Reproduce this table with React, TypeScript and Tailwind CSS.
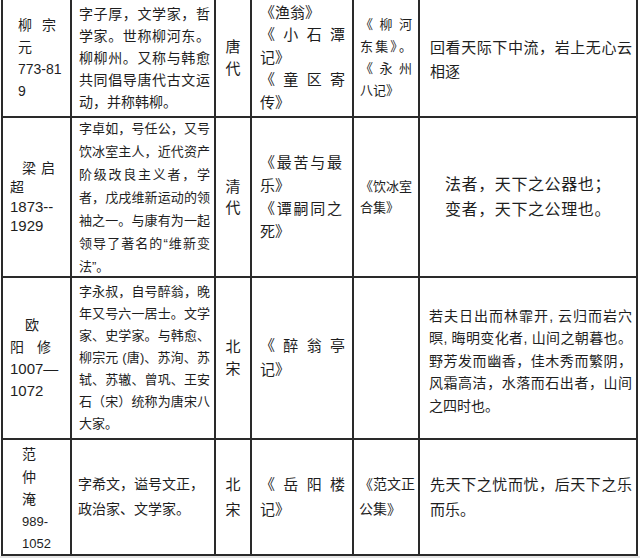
const J = '[text-align-last:justify] text-justify';

function Cell({ className = '', children }: { className?: string; children?: React.ReactNode }) {
  return <div className={`flex flex-col justify-center bg-white ${className}`}>{children}</div>;
}

export default function App() {
  return (
    <div className="h-[558px] w-[640px] bg-white text-[#1e1e1e] font-['Liberation_Sans','Noto_Sans_CJK_SC',sans-serif]">
      <div className="ml-[1px] grid w-[637px] grid-cols-[67px_142px_34px_100px_64px_216px] grid-rows-[116px_158px_160px_114px] gap-[2px] bg-[#2a2a2a] px-[2px] pb-[2px]">
        {/* 柳宗元 */}
        <Cell className="pl-[15px] text-[14px] leading-[22px] whitespace-nowrap">
          <p className="tracking-[10px]">柳宗</p>
          <p>元</p>
          <p>773-81</p>
          <p>9</p>
        </Cell>
        <Cell className="pl-[7px] pr-[4px] text-[14px] leading-[22px]">
          <p className={J}>字子厚，文学家，哲</p>
          <p className={J}>学家。世称柳河东。</p>
          <p className={J}>柳柳州。又称与韩愈</p>
          <p className={J}>共同倡导唐代古文运</p>
          <p>动，并称韩柳。</p>
        </Cell>
        <Cell className="items-center text-[15px] leading-[22px]">
          <p>唐</p>
          <p>代</p>
        </Cell>
        <Cell className="pl-[8px] pr-[7px] text-[15px] leading-[22.5px]">
          <p>《渔翁》</p>
          <p className={J}>《小石潭</p>
          <p>记》</p>
          <p className={J}>《童区寄</p>
          <p>传》</p>
        </Cell>
        <Cell className="pl-[6px] pr-[6px] text-[13px] leading-[22px]">
          <p className={J}>《柳河</p>
          <p className={J}>东集》。</p>
          <p className={J}>《永州</p>
          <p>八记》</p>
        </Cell>
        <Cell className="pl-[10px] pr-[4px] pt-[4px] text-[15px] leading-[24px]">
          <p className={J}>回看天际下中流，岩上无心云</p>
          <p>相逐</p>
        </Cell>

        {/* 梁启超 */}
        <Cell className="pl-[7px] text-[14px] leading-[19px]">
          <p className="pl-[12px] tracking-[5px]">梁启</p>
          <p>超</p>
          <p className="text-[15px]">1873--</p>
          <p className="text-[15px]">1929</p>
        </Cell>
        <Cell className="pl-[7px] pr-[4px] text-[13px] leading-[23px]">
          <p className={J}>字卓如，号任公，又号</p>
          <p className={J}>饮冰室主人，近代资产</p>
          <p className={J}>阶级改良主义者，学</p>
          <p className={J}>者，戊戌维新运动的领</p>
          <p className={J}>袖之一。与康有为一起</p>
          <p className={J}>领导了著名的“维新变</p>
          <p>法”。</p>
        </Cell>
        <Cell className="items-center text-[15px] leading-[21px]">
          <p>清</p>
          <p>代</p>
        </Cell>
        <Cell className="pl-[8px] pr-[10px] text-[15px] leading-[23px]">
          <p className={J}>《最苦与最</p>
          <p>乐》</p>
          <p className={J}>《谭嗣同之</p>
          <p>死》</p>
        </Cell>
        <Cell className="pl-[6px] text-[13px] leading-[21px]">
          <p>《饮冰室</p>
          <p>合集》</p>
        </Cell>
        <Cell className="items-center text-[16px] leading-[25px] tracking-[0.6px]">
          <div>
            <p>法者，天下之公器也；</p>
            <p>变者，天下之公理也。</p>
          </div>
        </Cell>

        {/* 欧阳修 */}
        <Cell className="pl-[7px] text-[14px] leading-[22px]">
          <p className="pl-[15px]">欧</p>
          <p className="tracking-[13px]">阳修</p>
          <p className="text-[15px]">1007—</p>
          <p className="text-[15px]">1072</p>
        </Cell>
        <Cell className="pl-[7px] pr-[4px] text-[13px] leading-[22px]">
          <p className={J}>字永叔，自号醉翁，晚</p>
          <p className={J}>年又号六一居士。文学</p>
          <p className={J}>家、史学家。与韩愈、</p>
          <p className={J}>柳宗元 (唐)、苏洵、苏</p>
          <p className={J}>轼、苏辙、曾巩、王安</p>
          <p className={J}>石（宋）统称为唐宋八</p>
          <p>大家。</p>
        </Cell>
        <Cell className="items-center text-[15px] leading-[22px]">
          <p>北</p>
          <p>宋</p>
        </Cell>
        <Cell className="pl-[8px] pr-[7px] text-[15px] leading-[24px]">
          <p className={J}>《醉翁亭</p>
          <p>记》</p>
        </Cell>
        <Cell />
        <Cell className="pl-[9px] pr-[4px] pt-[6px] text-[14px] leading-[22.5px]">
          <p className={J}>若夫日出而林霏开, 云归而岩穴</p>
          <p className={J}>暝, 晦明变化者, 山间之朝暮也。</p>
          <p className={J}>野芳发而幽香，佳木秀而繁阴，</p>
          <p className={J}>风霜高洁，水落而石出者，山间</p>
          <p>之四时也。</p>
        </Cell>

        {/* 范仲淹 */}
        <Cell className="pl-[19px] pt-[5px] text-[14px] leading-[22.5px]">
          <p>范</p>
          <p>仲</p>
          <p>淹</p>
          <p className="text-[13px]">989-</p>
          <p className="text-[13px]">1052</p>
        </Cell>
        <Cell className="pl-[6px] text-[14px] leading-[25px]">
          <p>字希文，谥号文正，</p>
          <p>政治家、文学家。</p>
        </Cell>
        <Cell className="items-center text-[15px] leading-[25px]">
          <p>北</p>
          <p>宋</p>
        </Cell>
        <Cell className="pl-[8px] pr-[7px] text-[15px] leading-[25px]">
          <p className={J}>《岳阳楼</p>
          <p>记》</p>
        </Cell>
        <Cell className="pl-[5px] text-[14px] leading-[25px]">
          <p>《范文正</p>
          <p>公集》</p>
        </Cell>
        <Cell className="pl-[10px] pr-[4px] text-[15px] leading-[25px]">
          <p className={J}>先天下之忧而忧，后天下之乐</p>
          <p>而乐。</p>
        </Cell>
      </div>
      <div className="h-[2px] bg-[#e4e4e4]" />
    </div>
  );
}
